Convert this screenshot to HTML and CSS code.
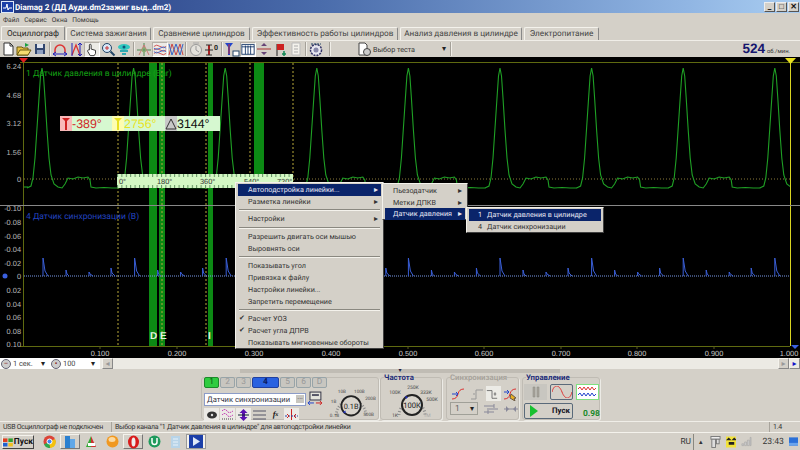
FILE: index.html
```html
<!DOCTYPE html>
<html lang="ru">
<head>
<meta charset="utf-8">
<title>Diamag 2</title>
<link rel="stylesheet" href="styles.css">
</head>
<body>
<div class="app">
  <header class="titlebar">
    <svg class="ti" width="13" height="12" viewBox="0 0 13 12"><rect width="13" height="12" fill="#dfe8f8"/><rect x="1" y="1" width="11" height="10" fill="#1c3fa8"/><path d="M2 7h3l1-4 1 6 1-2h3" stroke="#fff" fill="none"/></svg>
    <span class="title-text">Diamag 2 (ДД Ауди.dm2зажиг выд..dm2)</span>
    <span class="winbtns">
      <span class="winbtn">_</span><span class="winbtn">&#9633;</span><span class="winbtn">✕</span>
    </span>
  </header>
  <nav class="menubar"><span>Файл</span><span>Сервис</span><span>Окна</span><span>Помощь</span></nav>
  <div class="tabs">
    <span class="tab active t1">Осциллограф</span>
    <span class="tab t2">Система зажигания</span>
    <span class="tab t3">Сравнение цилиндров</span>
    <span class="tab t4">Эффективность работы цилиндров</span>
    <span class="tab t5">Анализ давления в цилиндре</span>
    <span class="tab t6">Электропитание</span>
  </div>
  <div class="toolbar">
    <span class="tb"><svg width="14" height="14" viewBox="0 0 14 14"><path d="M3 1h6l3 3v9H3z" fill="#fff" stroke="#333"/><path d="M9 1v3h3" fill="none" stroke="#333"/></svg></span>
    <span class="tb"><svg width="16" height="14" viewBox="0 0 16 14"><path d="M1 5h5l1 1h5v7H1z" fill="#e8c040" stroke="#6a5a10"/><path d="M1 13l3-5h11l-3 5z" fill="#f5dc70" stroke="#6a5a10"/><path d="M9 1l4 2-4 2z" fill="#19a040"/></svg></span>
    <span class="tb"><svg width="14" height="14" viewBox="0 0 14 14"><rect x="2" y="2" width="10" height="10" fill="#32466e"/><rect x="4" y="2" width="6" height="4" fill="#dfe4ee"/><rect x="4" y="8" width="6" height="4" fill="#8fa0c0"/></svg></span>
    <i class="sep"></i>
    <span class="tb"><svg width="16" height="15" viewBox="0 0 16 15"><path d="M3 11V8a5 5 0 0 1 10 0v3" fill="none" stroke="#d33" stroke-width="1.5"/><path d="M1 12h14M1 12l3-2M1 12l3 2M15 12l-3-2M15 12l-3 2" stroke="#22b" fill="none"/></svg></span>
    <span class="tb"><svg width="16" height="15" viewBox="0 0 16 15"><path d="M4 13L8 3l4 10" fill="none" stroke="#d33" stroke-width="1.3"/><path d="M12 1v13M10 3l2-2 2 2M10 12l2 2 2-2M4 1v13" stroke="#22b" fill="none"/></svg></span>
    <span class="tb pressed"><svg width="16" height="15" viewBox="0 0 16 15"><path d="M5 8V2.5a1 1 0 0 1 2 0V7l5 1.5V12l-1.5 2.5H6L3 9.5C2.600 8.500 4 7.500 5 8z" fill="#fff" stroke="#222"/></svg></span>
    <span class="tb"><svg width="15" height="15" viewBox="0 0 15 15"><circle cx="6" cy="6" r="4.500" fill="#d8e8f8" stroke="#246"/><path d="M9.500 9.500l4 4" stroke="#246" stroke-width="2"/><path d="M4 6h4M6 4v4" stroke="#c33"/></svg></span>
    <span class="tb"><svg width="16" height="15" viewBox="0 0 16 15"><ellipse cx="8" cy="5" rx="6" ry="3" fill="#30c8c0"/><path d="M4 9h8M6 12h4" stroke="#30a8b0" stroke-width="2"/><circle cx="8" cy="5" r="1.500" fill="#157"/></svg></span>
    <i class="sep"></i>
    <span class="tb"><svg width="16" height="15" viewBox="0 0 16 15"><path d="M8 1v13M1 8h14" stroke="#4a8a50"/><path d="M3 13l5-10 5 10" fill="none" stroke="#c77"/><circle cx="8" cy="8" r="2" fill="none" stroke="#8a6"/></svg></span>
    <span class="tb pressed"><svg width="16" height="15" viewBox="0 0 16 15"><path d="M1 4q3-3 7 0t7 0M1 8q3-3 7 0t7 0M1 12q3-3 7 0t7 0" fill="none" stroke="#c44"/><path d="M1 6q3 3 7 0t7 0M1 10q3 3 7 0t7 0" fill="none" stroke="#36c"/></svg></span>
    <span class="tb"><svg width="16" height="15" viewBox="0 0 16 15"><path d="M1 13L4 2l4 11 4-11 3 11" fill="none" stroke="#c44"/><path d="M1 2l3 11 4-11 4 11 3-11" fill="none" stroke="#36c"/></svg></span>
    <i class="sep"></i>
    <span class="tb"><svg width="16" height="15" viewBox="0 0 16 15"><circle cx="8" cy="8" r="5.500" fill="#e4e2dc" stroke="#999"/><path d="M8 4v4l3 2" fill="none" stroke="#999"/><path d="M5 1h6" stroke="#aaa"/></svg></span>
    <span class="tb"><svg width="16" height="15" viewBox="0 0 16 15"><path d="M5 3v10" stroke="#a22" stroke-width="2"/><path d="M2 3h6M2 13h6M1 8h8" stroke="#333"/><text class="tzero" x="10" y="8">0</text></svg></span>
    <i class="sep"></i>
    <span class="tb"><svg width="16" height="15" viewBox="0 0 16 15"><path d="M1 1h8L6 5v8L4 13V5z" fill="#24c"/><path d="M5 2v10" stroke="#c33"/><rect x="9" y="9" width="6" height="5" fill="#fff" stroke="#246"/></svg></span>
    <span class="tb pressed"><svg width="16" height="14" viewBox="0 0 16 14"><rect x="1" y="2" width="14" height="11" fill="#fff" stroke="#136"/><path d="M1 4.500h14M5 3v10M8 3v10M11 3v10" stroke="#136"/></svg></span>
    <span class="tb"><svg width="16" height="14" viewBox="0 0 16 14"><path d="M1 7h14" stroke="#a33"/><path d="M5 4h6l-3-3zM5 10h6l-3 3z" fill="#647"/></svg></span>
    <span class="tb"><svg width="15" height="15" viewBox="0 0 15 15"><path d="M4 14V2" stroke="#222"/><path d="M4 2h7v6H4z" fill="#c22"/><path d="M11 9v5M9 12h4" stroke="#185" stroke-width="1.500"/></svg></span>
    <span class="tb"><svg width="14" height="14" viewBox="0 0 14 14"><path d="M3 1h8v12H3z" fill="#f4f2ec" stroke="#bbb"/><path d="M5 4h4M5 7h4M5 10h4" stroke="#aaa"/></svg></span>
    <i class="sep"></i>
    <span class="tb"><svg width="16" height="15" viewBox="0 0 16 15"><circle cx="8" cy="8" r="5.500" fill="#e8e8f0" stroke="#336" stroke-width="1.500" stroke-dasharray="2 1"/><circle cx="8" cy="8" r="2.500" fill="#88a"/><path d="M3 2h10" stroke="#246" stroke-dasharray="2 1"/></svg></span>
    <i class="sep far"></i>
    <span class="test-select">
      <svg width="15" height="15" viewBox="0 0 15 15"><path d="M2 1h6l2 2v10H2z" fill="#fff" stroke="#444"/><circle cx="10" cy="10" r="3.500" fill="#ccc" stroke="#444"/></svg>
      <span class="test-label">Выбор теста</span><span class="drop">▾</span>
    </span>
    <i class="sep"></i>
    <span class="rpm"><b>524</b><small>об./мин.</small></span>
  </div>

  <main class="plot">
    <svg class="scope" width="800" height="301" viewBox="0 57 800 301">
      <defs>
        <path id="gp" class="gtrace" d="M-15 188L-11 186-9 178-7 158-5 128-3 98-1.500 76 0 68 1.500 76 3 98 5 130 7 158 9 175 12 184 16 187 20 188 23 184 26 178 31 179 36 177 41 178 46 177 48 180 49 187 54 188 62 187.500 70 188 77 188"/>
        <g id="bp" class="btrace"><path d="M0 276v-18l2 13 3 5M23 276v-6l1 4 2 2M46 276v-4l1 2 3 2M68 276v-8l1 5 3 3"/></g>
        <pattern id="rtop" width="4.400" height="14" patternUnits="userSpaceOnUse" x="117" y="174"><path d="M.5 0v3M.5 14v-3" class="rtick"/></pattern>
        <clipPath id="tr"><rect x="24" y="63" width="766" height="142"/></clipPath>
        <clipPath id="br"><rect x="24" y="207" width="766" height="139"/></clipPath>
      </defs>
      <rect class="bg" x="0" y="57" width="800" height="301"/>
      <g class="bands">
        <rect x="149" y="63" width="8" height="283"/><rect x="159" y="63" width="6" height="283"/>
        <rect x="208" y="63" width="5" height="283"/><rect x="254" y="63" width="10" height="142"/>
      </g>
      <path class="ydot" d="M118 63V346M162 63V346M206 63V346M250 63V205M293 63V205"/>
      <path class="zero" d="M24 179H790"/>
      <g clip-path="url(#tr)">
        <path class="gtrace" d="M10 187H28"/>
        <use href="#gp" x="42"/><use href="#gp" x="133.600"/><use href="#gp" x="225.200"/><use href="#gp" x="316.800"/><use href="#gp" x="408.400"/><use href="#gp" x="500"/><use href="#gp" x="591.600"/><use href="#gp" x="683.200"/><use href="#gp" x="774.800"/>
      </g>
      <path class="bzero" d="M24 276H790"/>
      <g clip-path="url(#br)">
        <use href="#bp" x="43"/><use href="#bp" x="134.600"/><use href="#bp" x="226.200"/><use href="#bp" x="317.800"/><use href="#bp" x="408.400"/><use href="#bp" x="500"/><use href="#bp" x="591.600"/><use href="#bp" x="683.200"/><use href="#bp" x="774.800"/>
      </g>
      <path class="axis" d="M23.500 62V346M20 62.500H800M20 346.500H790"/>
      <path class="yline" d="M790.500 62V346"/>
      <path class="sepl" d="M0 205.500H800"/>
      <path class="xt" d="M100 346v3M177 346v3M254 346v3M331 346v3M408 346v3M484 346v3M561 346v3M637 346v3M714 346v3"/>
      <path d="M19 58h9l-4.500 5z" class="mr"/><path d="M785 58h11l-5.500 6z" class="my"/><path d="M791 345h8l-4 4z" class="mb"/><circle cx="5" cy="276" r="2.500" class="mb"/>
      <g class="ylab">
        <text x="21" y="69">6.24</text><text x="21" y="98">4.68</text><text x="21" y="126">3.12</text><text x="21" y="155">1.56</text><text x="21" y="182">0</text>
        <text x="21" y="211">-0.10</text><text x="21" y="225">-0.08</text><text x="21" y="239">-0.06</text><text x="21" y="252">-0.04</text><text x="21" y="266">-0.02</text><text x="21" y="279">0</text><text x="21" y="293">0.02</text><text x="21" y="307">0.04</text><text x="21" y="320">0.06</text><text x="21" y="334">0.08</text><text x="21" y="347">0.10</text>
      </g>
      <g class="xlab">
        <text x="100" y="356">0.100</text><text x="177" y="356">0.200</text><text x="254" y="356">0.300</text><text x="331" y="356">0.400</text><text x="408" y="356">0.500</text><text x="484" y="356">0.600</text><text x="561" y="356">0.700</text><text x="637" y="356">0.800</text><text x="714" y="356">0.900</text><text x="789" y="356">1.000</text>
      </g>
      <text class="chg" x="26" y="76">1 Датчик давления в цилиндре (Bar)</text>
      <text class="chb" x="26" y="219">4 Датчик синхронизации (В)</text>
      <g class="letters"><text x="150" y="339">D</text><text x="160" y="339">E</text><text x="208" y="339">I</text></g>
      <rect class="ruler" x="117" y="174" width="176" height="14"/>
      <rect x="117" y="174" width="176" height="14" fill="url(#rtop)"/>
      <g class="rlab"><text x="119" y="184">0°</text><text x="157" y="184">180°</text><text x="200" y="184">360°</text><text x="244" y="184">540°</text><text x="277" y="184">720°</text></g>
      <rect class="read" x="60" y="116" width="160" height="15"/>
      <rect x="60" y="116" width="12" height="15" fill="#f8b8b8"/><rect x="112" y="116" width="12" height="15" fill="#fdfdb0"/><rect x="165" y="116" width="12" height="15" fill="#c8c8c8"/>
      <path d="M62 118h8l-3 3v9h-2v-9z" fill="#d02020"/><path d="M114 118h8l-3 3v9h-2v-9z" fill="#e8e020"/><path d="M171 119l-5 10h10z" fill="none" stroke="#333"/>
      <text class="rv red" x="72" y="128">-389°</text><text class="rv yel" x="124" y="128">2756°</text><text class="rv blk" x="177" y="128">3144°</text>
    </svg>
  </main>

  <div class="ctx m1">
    <div class="mi hi">Автоподстройка линейки...<span class="ar">▸</span></div>
    <div class="mi">Разметка линейки<span class="ar">▸</span></div>
    <hr>
    <div class="mi">Настройки<span class="ar">▸</span></div>
    <hr>
    <div class="mi">Разрешить двигать оси мышью</div>
    <div class="mi">Выровнять оси</div>
    <hr>
    <div class="mi">Показывать угол</div>
    <div class="mi">Привязка к файлу</div>
    <div class="mi">Настройки линейки...</div>
    <div class="mi">Запретить перемещение</div>
    <hr>
    <div class="mi ck">Расчет УОЗ</div>
    <div class="mi ck">Расчет угла ДПРВ</div>
    <div class="mi">Показывать мнгновенные обороты</div>
  </div>
  <div class="ctx m2">
    <div class="mi">Пьезодатчик<span class="ar">▸</span></div>
    <div class="mi">Метки ДПКВ<span class="ar">▸</span></div>
    <div class="mi hi">Датчик давления<span class="ar">▸</span></div>
  </div>
  <div class="ctx m3">
    <div class="mi hi"><span class="num">1</span>Датчик давления в цилиндре</div>
    <div class="mi"><span class="num">4</span>Датчик синхронизации</div>
  </div>

  <div class="scrollrow">
    <span class="combo c1"><span class="rb">−</span><span class="cv">1 сек.</span><span class="drop">▾</span></span>
    <span class="combo c2"><span class="rb tar">•</span><span class="cv">100</span><span class="drop">▾</span></span>
    <span class="sb gl">◂</span>
    <span class="track"></span>
    <span class="sb gl">▸</span><span class="sb bl">▸</span>
  </div>

  <div class="panel">
    <div class="splitter"><span>▾</span></div>
    <section class="grp g1">
      <div class="chans">
        <span class="ch on-g">1</span><span class="ch">2</span><span class="ch">3</span><span class="ch on-b">4</span><span class="ch">5</span><span class="ch">6</span><span class="ch">D</span>
      </div>
      <div class="g1body">
        <div class="g1left">
          <div class="inrow">
            <span class="input">Датчик синхронизации<span class="dots">...</span></span>
            <svg width="17" height="16" viewBox="0 0 17 16"><rect x="3" y="1" width="11" height="8" fill="#e4e4dc" stroke="#334"/><rect x="5" y="3" width="7" height="2" fill="#556"/><path d="M1 12h6M1 12l2-2M1 12l2 2" stroke="#24c" fill="none"/><path d="M9 12h6l-2-2M15 12l-2 2" stroke="#c22" fill="none"/></svg>
          </div>
          <div class="icorow">
            <span class="ib lit"><svg width="12" height="10" viewBox="0 0 12 10"><ellipse cx="6" cy="5" rx="5" ry="3.500" fill="#333"/><circle cx="6" cy="5" r="1.200" fill="#ddd"/></svg></span>
            <span class="ib lit"><svg width="13" height="13" viewBox="0 0 13 13"><path d="M1 3q3-3 5 0t6 0M1 7q3-3 5 0t6 0" fill="none" stroke="#b2a" stroke-dasharray="1.500 .8"/><path d="M1 11h11" stroke="#444" stroke-dasharray="1 1"/></svg></span>
            <span class="ib lit"><svg width="13" height="14" viewBox="0 0 13 14"><path d="M6.500 1l4 4H8v4h2.500l-4 4-4-4H5V5H2.500z" fill="#5a10b0"/><path d="M1 7h11" stroke="#123"/></svg></span>
            <span class="ib"><svg width="13" height="12" viewBox="0 0 13 12"><path d="M0 2h13M0 6h13M0 10h13" stroke="#556"/></svg></span>
            <span class="ib fx">f<sub>x</sub></span>
            <span class="ib lit"><svg width="13" height="13" viewBox="0 0 13 13"><path d="M6.500 1v11" stroke="#c22"/><path d="M0 8h13" stroke="#24a" stroke-dasharray="2 1"/><path d="M2 6l2 2-2 2M11 6L9 8l2 2" fill="none" stroke="#c22"/></svg></span>
          </div>
        </div>
        <svg class="knob k1" width="52" height="38" viewBox="0 0 52 38">
          <path class="kt" d="M9 31A15 15 0 1 1 41 31"/>
          <circle class="kring" cx="25" cy="21" r="10.500"/>
          <path class="kmark" d="M16 28l3-2v3z"/>
          <text class="kc" x="25" y="24">0.1В</text>
          <g class="kl"><text x="15" y="7">10В</text><text x="34" y="7">100В</text><text x="46" y="15">200В</text><text x="44" y="32">500В</text><text x="6" y="18">1В</text><text x="7" y="33">0.1В</text></g>
        </svg>
      </div>
    </section>
    <section class="grp g2">
      <h3>Частота</h3>
      <svg class="knob k2" width="58" height="36" viewBox="0 0 58 36">
        <path class="kt" d="M16 30A13 13 0 1 1 42 30"/>
        <circle class="kring" cx="29" cy="20" r="10"/>
        <path class="kmark" d="M22 11l3 1-2 2z"/>
        <text class="kc2" x="29" y="23">100К</text>
        <g class="kl"><text x="30" y="4">250К</text><text x="43" y="9">333К</text><text x="49" y="16">500К</text><text x="12" y="9">100К</text><text x="12" y="32">1К</text><text class="dim" x="44" y="32">1М</text></g>
      </svg>
    </section>
    <section class="grp g3">
      <h3 class="dim-h">Синхронизация</h3>
      <div class="syncrow r1">
        <svg width="14" height="14" viewBox="0 0 14 14"><path d="M1 12q5 0 6-5t6-5" fill="none" stroke="#d33"/><path d="M1 7h6M5 5l2 2-2 2" stroke="#24c" fill="none"/></svg>
        <svg width="14" height="14" viewBox="0 0 14 14"><path d="M1 12h5V3h7" fill="none" stroke="#999"/><path d="M3 7h2" stroke="#999"/></svg>
        <span class="syncon"><svg width="14" height="14" viewBox="0 0 14 14"><path d="M1 3h6v9h6" fill="none" stroke="#666"/><path d="M9 7h3M10.500 5v4" stroke="#666"/></svg></span>
        <svg width="14" height="14" viewBox="0 0 14 14"><path d="M1 12q5 0 6-5t6-5" fill="none" stroke="#d33"/><path d="M1 5h5M4 3l2 2-2 2" stroke="#24c" fill="none"/><path d="M8 7l5 4-2 .500 1 2.500-5-3z" fill="#e8b020" stroke="#654"/></svg>
      </div>
      <div class="syncrow r2">
        <span class="mini">1<span class="drop">▾</span></span>
        <svg width="14" height="12" viewBox="0 0 14 12"><path d="M0 3h10M3 6h11M0 9h10" stroke="#889"/><path d="M10 1v4M4 7v4" stroke="#889"/></svg>
        <svg width="14" height="12" viewBox="0 0 14 12"><path d="M0 6h14" stroke="#889"/><path d="M2 3l3 3-3 3zM12 3L9 6l3 3z" fill="#889"/></svg>
      </div>
    </section>
    <section class="grp g4">
      <h3>Управление</h3>
      <div class="ctlrow">
        <span class="cb pausebtn"><svg width="8" height="12" viewBox="0 0 8 12"><path d="M1 1h2v10H1zM5 1h2v10H5z" fill="#a8a49c" stroke="#8a8880" stroke-width=".5"/></svg></span>
        <span class="cb sinebtn"><svg width="20" height="12" viewBox="0 0 20 12"><path d="M0 6C2 -2 7 -2 10 6S18 14 20 6" fill="none" stroke="#d33"/></svg></span>
        <span class="cb wavebtn"><svg width="20" height="14" viewBox="0 0 20 14"><path d="M0 4l2-2 2 3 2-3 2 3 2-3 2 3 2-3 2 3 2-2" fill="none" stroke="#d33"/><path d="M0 10l2-2 2 3 2-3 2 3 2-3 2 3 2-3 2 3 2-2" fill="none" stroke="#24c"/></svg></span>
      </div>
      <div class="ctlrow">
        <span class="cb start"><svg width="8" height="12" viewBox="0 0 8 12"><path d="M0 0l8 6-8 6z" fill="#18c030"/></svg><b>Пуск</b></span>
        <b class="fps">0.98</b>
      </div>
    </section>
  </div>

  <footer class="status">
    <span class="s1">USB Осциллограф не подключен</span>
    <span class="s2">Выбор канала "1  Датчик давления в цилиндре" для автоподстройки линейки</span>
    <span class="s3">1.4</span>
  </footer>

  <div class="taskbar">
    <span class="startb"><svg width="11" height="10" viewBox="0 0 11 10"><path d="M0 1l5 0v4H0z" fill="#e04020"/><path d="M6 1h5v4H6z" fill="#30a030"/><path d="M0 6h5v4H0z" fill="#2060d0"/><path d="M6 6h5v4H6z" fill="#f0c020"/></svg>Пуск</span>
    <span class="task"><svg width="13" height="13" viewBox="0 0 13 13"><circle cx="6.500" cy="6.500" r="6" fill="#db4437"/><path d="M6.500 6.500L1 9.500a6 6 0 0 0 6 3.500z" fill="#2da94f"/><path d="M6.500 6.500L7 13a6 6 0 0 0 5-9z" fill="#f4c20d"/><circle cx="6.500" cy="6.500" r="2.500" fill="#4285f4" stroke="#fff"/></svg></span>
    <span class="task down"><svg width="12" height="14" viewBox="0 0 12 14"><rect x="1" y="1" width="5" height="12" fill="#2a80d0"/><rect x="6" y="4" width="5" height="9" fill="#60a8e8"/></svg></span>
    <span class="task"><svg width="14" height="13" viewBox="0 0 14 13"><path d="M7 1l5 11H7z" fill="#c33"/><path d="M7 1L2 12h5z" fill="#3a3"/><path d="M4 8h7v3H4z" fill="#fff"/></svg></span>
    <span class="task"><svg width="13" height="13" viewBox="0 0 13 13"><circle cx="6.500" cy="6.500" r="6" fill="#f09820"/><ellipse cx="6" cy="4.500" rx="3.500" ry="2.500" fill="#fbd9a0"/></svg></span>
    <span class="task down"><svg width="13" height="14" viewBox="0 0 13 14"><ellipse cx="6.500" cy="7" rx="5.500" ry="6.500" fill="#d81c1c"/><ellipse cx="6.500" cy="7" rx="2" ry="4.500" fill="#eee"/></svg></span>
    <span class="task"><svg width="13" height="13" viewBox="0 0 13 13"><circle cx="6.500" cy="6.500" r="6" fill="#1f9a5c"/><path d="M4 3v4a2.500 2.500 0 0 0 5 0V3" stroke="#fff" stroke-width="1.500" fill="none"/></svg></span>
    <span class="task"><svg width="11" height="14" viewBox="0 0 11 14"><rect x="1" y="1" width="9" height="12" fill="#b8d4e8"/><path d="M3 4h5M3 7h5M3 10h5" stroke="#e8f2fa"/></svg></span>
    <span class="task sel"><svg width="14" height="13" viewBox="0 0 14 13"><rect width="14" height="13" fill="#1c3fa8"/><path d="M4 2l7 4.500L4 11z" fill="#dfe8f8"/></svg></span>
    <span class="lang">RU</span>
    <span class="tray">
      <span class="trup">▴</span>
      <svg width="12" height="13" viewBox="0 0 12 13"><rect x="1" y="1" width="10" height="3" fill="#eee" stroke="#777"/><rect x="2" y="4" width="4" height="9" fill="#ddd" stroke="#777"/><rect x="7" y="4" width="3" height="5" fill="#ddd" stroke="#777"/></svg>
      <svg width="12" height="12" viewBox="0 0 12 12"><rect width="12" height="12" fill="#f2e23a"/><path d="M0 4l3-3 3 3 3-3 3 3M3 6h6v3H3z" fill="#222"/></svg>
      <svg width="12" height="11" viewBox="0 0 12 11"><path d="M1 10V8h2v2zM4 10V6h2v4zM7 10V4h2v6zM10 10V1h1v9z" fill="#ccc" stroke="#999" stroke-width=".5"/></svg>
      <span class="clock">23:43</span>
      <svg width="10" height="9" viewBox="0 0 10 9"><rect width="10" height="9" fill="#2a70d8"/><rect y="6" width="10" height="3" fill="#6aa4ec"/></svg>
    </span>
  </div>
</div>
</body>
</html>
```
FILE: styles.css
```css
* { box-sizing: border-box; }
html, body { margin: 0; padding: 0; }
body { width: 800px; height: 450px; overflow: hidden; background: #d4d0c8; }
.app {
  position: relative; width: 800px; height: 450px;
  display: flex; flex-direction: column;
  font: 7.6px Roboto, "Liberation Sans", sans-serif; color: #333; background: #d4d0c8;
  text-rendering: geometricPrecision; white-space: nowrap;
}
.titlebar {
  height: 13px; flex: none; display: flex; align-items: center; padding-left: 1px; gap: 1px;
  background: linear-gradient(90deg, #23387f 0%, #4a6cab 40%, #8fb4e2 85%, #a9cdf1 100%);
}
.title-text { color: #fff; font-weight: bold; font-size: 8.1px; }
.winbtns { margin-left: auto; display: flex; gap: 1px; padding-right: 1px; }
.winbtn { width: 11px; height: 10px; background: #d4d0c8; border: 1px solid #888; border-color: #eee #555 #555 #eee; font-size: 8px; line-height: 8px; text-align: center; color: #111; font-weight: bold; }
.menubar { height: 14px; flex: none; display: flex; align-items: center; gap: 5px; padding-left: 3px; font-size: 6.6px; color: #333; }
.tabs { height: 14px; flex: none; display: flex; align-items: flex-end; gap: 1px; padding-left: 1px; border-bottom: 1px solid #f0eee8; }
.tab { height: 13px; display: flex; align-items: center; justify-content: center; background: #d8d4cc; border: 1px solid #f4f2ec; border-right-color: #888; border-bottom: 0; border-radius: 2px 2px 0 0; font-size: 8.2px; color: #444; }
.tab.active { height: 14px; background: #d4d0c8; color: #222; }
.t1 { width: 64px; } .t2 { width: 85px; } .t3 { width: 97px; margin-left: 1px; } .t4 { width: 146px; margin-left: 1px; } .t5 { width: 122px; margin-left: 1px; } .t6 { width: 75px; margin-left: 1px; }
.toolbar { height: 16px; flex: none; display: flex; align-items: center; }
.tb { width: 16px; height: 15px; flex: none; display: flex; align-items: center; justify-content: center; }
.tb.pressed { background: #ecebe6; border: 1px solid #f6f5f0; border-color: #b4b0a8 #fff #fff #b4b0a8; }
.sep { width: 1px; height: 14px; background: #a4a098; margin: 0 2px 0 1px; flex: none; box-shadow: 1px 0 #f0eee8; }
.sep.far { margin-left: 5px; margin-right: 27px; }
.tzero { font: bold 7px Roboto, sans-serif; fill: #222; }
.test-select { width: 92px; flex: none; display: flex; align-items: center; gap: 1px; }
.test-label { font-size: 7.2px; flex: 1; }
.drop { font-size: 8px; color: #222; line-height: 8px; }
.test-select .drop { margin-right: 3px; }
.rpm { margin-left: auto; display: flex; align-items: baseline; gap: 2px; padding-right: 10px; color: #16166e; }
.rpm b { font: bold 13.5px "Liberation Sans", sans-serif; line-height: 14px; }
.rpm small { font-size: 5.8px; color: #333; }
.plot { height: 301px; flex: none; background: #000; }
.scope { display: block; }
.bg { fill: #000; }
.bands rect { fill: #0c8a14; }
.ydot { stroke: #b8a83a; stroke-dasharray: 2 2; fill: none; }
.zero { stroke: #8a7a3a; stroke-dasharray: 1 2; }
.gtrace { fill: none; stroke: #1fa025; stroke-width: 1.1; }
.btrace path { fill: none; stroke: #3a5fd8; stroke-width: 1; }
.bzero { stroke: #7a9ae8; stroke-dasharray: 1 1; }
.axis { stroke: #5f6a10; fill: none; }
.yline { stroke: #d8d420; }
.sepl { stroke: #888; }
.xt { stroke: #5a5a20; }
.mr { fill: #e02020; } .my { fill: #e8e020; } .mb { fill: #3a60e0; }
.ylab text { font: 7.4px "Liberation Sans", sans-serif; fill: #b8b8b8; text-anchor: end; }
.xlab text { font: 7.4px "Liberation Sans", sans-serif; fill: #c8c8c8; text-anchor: middle; }
.chg { font: 8.5px Roboto, sans-serif; fill: #14a014; }
.chb { font: 8.5px Roboto, sans-serif; fill: #2244c0; }
.letters text { font: bold 10px "Liberation Sans", sans-serif; fill: #e8f4e0; }
.ruler { fill: #d4f8c4; }
.rtick { stroke: #5f8f5f; fill: none; }
.rlab text { font: 7.4px "Liberation Sans", sans-serif; fill: #333; }
.read { fill: #d6f8d0; }
.rv { font: 12.4px "Liberation Sans", sans-serif; }
.rv.red { fill: #d02828; } .rv.yel { fill: #e8e420; } .rv.blk { fill: #111; }
.ctx { position: absolute; background: #d4d0c8; padding: 1px 2px 0; border: 1px solid #808080; border-color: #f4f2ec #404040 #404040 #f4f2ec; font-size: 7.2px; color: #333; }
.m1 { left: 235px; top: 182px; width: 149px; height: 167px; }
.m2 { left: 382px; top: 183px; width: 86px; height: 37px; }
.m3 { left: 466px; top: 207px; width: 138px; height: 26px; }
.mi { position: relative; height: 11.7px; line-height: 11.7px; padding-left: 10px; }
.m2 .mi { padding-left: 8px; }
.m3 .mi { padding-left: 9px; }
.mi.hi { background: #0a246a; color: #e8e8f4; }
.mi.ck::before { content: "✔"; position: absolute; left: 1px; font-size: 7px; }
.ar { position: absolute; right: 3px; top: 0; font-size: 8px; }
.num { display: inline-block; width: 9px; }
.ctx hr { margin: 2px 1px; height: 2px; border: 0; border-top: 1px solid #8a8880; border-bottom: 1px solid #f4f2ec; }
.scrollrow { height: 11px; flex: none; display: flex; align-items: center; background: #eceae4; font-size: 7.4px; }
.combo { display: flex; align-items: center; background: #fff; height: 11px; }
.c1 { width: 50px; } .c2 { width: 50px; margin-right: 2px; }
.rb { width: 10px; height: 10px; flex: none; margin-left: 1px; border: 1px solid #667; border-radius: 50%; background: #ccc; font-size: 8px; line-height: 7px; text-align: center; color: #822; }
.cv { flex: 1; padding-left: 2px; color: #444; }
.combo .drop { margin-right: 5px; }
.sb { width: 11px; height: 11px; flex: none; background: #d4d0c8; border: 1px solid #888; border-color: #f4f2ec #888 #888 #f4f2ec; font-size: 8px; line-height: 9px; text-align: center; }
.gl { color: #999; }
.bl { color: #1414c8; background: #eceae4; }
.track { flex: 1; }
.panel { position: relative; height: 52px; flex: none; display: flex; align-items: flex-start; padding: 8px 0 0 201px; }
.splitter { position: absolute; left: 240px; top: 0; width: 320px; height: 4px; background: #c0bcb4; font-size: 6px; line-height: 4px; text-align: center; color: #224; }
.grp { position: relative; height: 43px; border: 1px solid #c0bcb4; border-radius: 3px; box-shadow: 1px 1px #ecebe6; flex: none; }
.grp h3 { position: absolute; margin: 0; top: -5px; left: 3px; background: #d4d0c8; font-size: 7.8px; font-weight: bold; color: #1c2c78; line-height: 10px; }
h3.dim-h, .grp h3.dim-h { color: #a8a49c; }
.g1 { width: 178px; padding: 0 2px; }
.g2 { width: 62px; margin-left: 1px; }
.g3 { width: 73px; margin-left: 4px; }
.g4 { width: 78px; margin-left: 3px; }
.chans { display: flex; gap: 1px; height: 11px; margin-top: -1px; }
.ch { width: 15px; height: 11px; background: #c8c6c0; border: 1px solid #98a4a8; border-radius: 2px; color: #999; font-size: 8.4px; line-height: 9px; text-align: center; }
.ch.on-g { background: #2fcc40; color: #0a5a10; border-color: #1a8a2a; }
.ch.on-b { width: 27px; background: #2a62e0; color: #0a1a60; font-weight: bold; border-color: #2040a0; }
.g1body { display: flex; margin-top: 3px; }
.g1left { width: 120px; flex: none; }
.inrow { display: flex; align-items: center; gap: 1px; }
.input { width: 103px; height: 13px; display: flex; align-items: center; justify-content: space-between; padding: 0 1px 0 2px; background: #fff; border: 1px solid #8c9cc8; font-size: 7.6px; color: #334; }
.dots { width: 8px; height: 8px; background: #c8c6c0; font-size: 7px; line-height: 4px; text-align: center; }
.icorow { display: flex; gap: 1px; margin-top: 1px; }
.ib { width: 15px; height: 13px; display: flex; align-items: center; justify-content: center; }
.ib.lit { background: #eceae6; }
.fx { font: bold italic 8px "Liberation Serif", serif; color: #111; }
.fx sub { font-size: 6px; line-height: 0; }
.knob { display: block; }
.kt { fill: none; stroke: #888; stroke-width: 3; stroke-dasharray: 1 2; }
.kring { fill: #d8d4cc; stroke: #222; stroke-width: 2; }
.kmark { fill: #2030c0; }
.kc { font: 8px Roboto, sans-serif; fill: #222; text-anchor: middle; }
.kc2 { font: 7.6px Roboto, sans-serif; fill: #222; text-anchor: middle; }
.kl text { font: 5px Roboto, sans-serif; fill: #444; text-anchor: middle; }
.kl text.dim { fill: #aaa; }
.k1 { margin-top: -6px; margin-left: 4px; }
.k2 { margin: 7px 0 0 2px; }
.syncrow { display: flex; align-items: center; }
.r1 { gap: 2px; margin: 8px 0 0 4px; }
.syncon { width: 15px; height: 15px; background: #ecebe6; display: flex; align-items: center; justify-content: center; }
.r2 { gap: 3px; margin: 1px 0 0 3px; }
.mini { width: 28px; height: 13px; display: flex; justify-content: space-between; align-items: center; padding: 0 3px 0 4px; border: 1px solid #a0a098; font-size: 8.4px; color: #666; }
.r1 svg:first-child { margin-right: 3px; }
.r2 svg { margin-left: 3px; }
.ctlrow { display: flex; align-items: center; gap: 3px; padding-left: 1px; }
.ctlrow:nth-of-type(1) { margin-top: 6px; }
.ctlrow + .ctlrow { margin-top: 2px; }
.cb { height: 16px; display: flex; align-items: center; justify-content: center; flex: none; }
.pausebtn { width: 23px; background: #c8c6c0; }
.sinebtn { width: 23px; background: #d4d0c8; border: 1px solid #5a6a7a; border-radius: 2px; }
.wavebtn { width: 23px; background: #fff; border: 1px solid #80e080; }
.start { width: 49px; border: 1px solid #5a6a7a; border-radius: 2px; justify-content: flex-start; gap: 14px; padding-left: 5px; }
.start b { font-size: 7.8px; color: #112; }
.fps { font-size: 8.4px; color: #1a8a2a; margin: 7px 0 0 7px; }
.status { height: 11px; flex: none; display: flex; font-size: 7px; letter-spacing: -.27px; color: #333; line-height: 10px; border-top: 1px solid #f0eee8; }
.status span { padding-left: 3px; border-right: 1px solid #a8a49c; }
.s1 { width: 112px; } .s2 { width: 658px; } .status .s3 { flex: 1; border: 0; }
.taskbar { height: 18px; flex: 1; display: flex; align-items: center; padding-left: 2px; background: #d4d0c8; border-top: 1px solid #f4f2ec; }
.startb { width: 32px; height: 14px; flex: none; display: flex; align-items: center; justify-content: center; gap: 1px; border: 1px solid #666; border-color: #f4f2ec #444 #444 #f4f2ec; font-size: 8.4px; font-weight: bold; color: #111; }
.task { width: 20px; height: 15px; flex: none; display: flex; align-items: center; justify-content: center; margin-left: 1px; }
.startb + .task { margin-left: 5px; }
.task.down { border: 1px solid #888; border-color: #f4f2ec #777 #777 #f4f2ec; }
.task.sel { background: #f4f2ec; border: 1px solid #999; }
.lang { margin-left: auto; font-size: 8.4px; color: #333; padding-right: 2px; }
.tray { width: 107px; height: 16px; flex: none; display: flex; align-items: center; gap: 5px; padding: 0 2px 0 5px; border-left: 1px solid #8a8880; }
.trup { font-size: 7px; color: #333; margin-right: 2px; }
.clock { font-size: 8.6px; color: #333; margin-left: 5px; }
```
